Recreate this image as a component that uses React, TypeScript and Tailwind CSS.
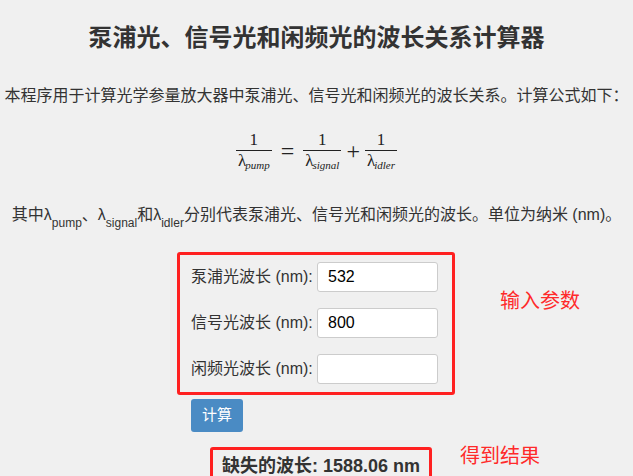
import React, { useState } from 'react';

const sans = { fontFamily: '"Liberation Sans", "Noto Sans CJK SC", sans-serif' };
const serif = { fontFamily: '"Liberation Serif", "DejaVu Serif", serif' };

const Frac: React.FC<{ sub: string }> = ({ sub }) => (
  <span className="inline-flex flex-col items-center mx-[3px]">
    <span className="text-[17px] leading-[20px] px-1">1</span>
    <span className="block w-full border-t border-[#222]" />
    <span className="text-[17px] leading-[20px] px-[2px] whitespace-nowrap">
      λ<span className="italic text-[11px] relative top-[3px] -ml-[1px]">{sub}</span>
    </span>
  </span>
);

const App: React.FC = () => {
  const [pump, setPump] = useState('532');
  const [signal, setSignal] = useState('800');
  const [idler, setIdler] = useState('');
  const [result, setResult] = useState('1588.06');

  const calc = () => {
    const p = parseFloat(pump);
    const s = parseFloat(signal);
    if (p > 0 && s > 0 && s !== p) {
      const i = 1 / (1 / p - 1 / s);
      setResult(i.toFixed(2));
    }
  };

  const rows = [
    { label: '泵浦光波长 (nm):', value: pump, set: setPump },
    { label: '信号光波长 (nm):', value: signal, set: setSignal },
    { label: '闲频光波长 (nm):', value: idler, set: setIdler },
  ];

  return (
    <div className="relative h-[476px] overflow-hidden bg-[#f0f0f0] text-[#333]" style={sans}>
      <h1 className="pt-[22px] text-center text-[24px] leading-[32px] font-bold">
        泵浦光、信号光和闲频光的波长关系计算器
      </h1>

      <p className="mt-[30px] text-center text-[16px] leading-[24px]">
        本程序用于计算光学参量放大器中泵浦光、信号光和闲频光的波长关系。计算公式如下：
      </p>

      <div className="mt-[22px] flex items-center justify-center text-[#222]" style={serif}>
        <Frac sub="pump" />
        <span className="text-[24px] mx-[6px] leading-none">=</span>
        <Frac sub="signal" />
        <span className="text-[24px] mx-[2px] leading-none">+</span>
        <Frac sub="idler" />
      </div>

      <p className="mt-[31px] text-center text-[16px] leading-[24px]">
        其中λ<sub className="text-[12px] align-[-4px]">pump</sub>、λ<sub className="text-[12px] align-[-4px]">signal</sub>和λ
        <sub className="text-[12px] align-[-4px]">idler</sub>分别代表泵浦光、信号光和闲频光的波长。单位为纳米 (nm)。
      </p>

      <div className="ml-[177px] mt-[25px] w-[278px] h-[143px] border-[3px] border-[#ff2020] rounded-[3px] pt-[7px] pl-[11px] flex flex-col gap-[16px]">
        {rows.map(r => (
          <div key={r.label} className="flex items-center h-[30px]">
            <label className="w-[126px] text-[16px] whitespace-nowrap">{r.label}</label>
            <input
              value={r.value}
              onChange={e => r.set(e.target.value)}
              className="w-[121px] h-[30px] bg-white border border-[#ccc] rounded-[3px] px-[10px] text-[16px] text-black outline-none"
            />
          </div>
        ))}
      </div>

      <button
        onClick={calc}
        className="ml-[191px] mt-[4px] w-[52px] h-[33px] rounded-[3px] bg-[#4a8bc4] text-white text-[15px]"
      >
        计算
      </button>

      <div className="ml-[210px] mt-[15px] w-[222px] h-[40px] border-[3px] border-[#ff2020] rounded-[3px] pl-[9px] pt-[4px]">
        <span className="text-[18px] font-bold leading-[24px] whitespace-nowrap">缺失的波长: {result} nm</span>
      </div>

      <span className="absolute left-[500px] top-[289px] text-[20px] leading-[24px] text-[#ff2a2a]">输入参数</span>
      <span className="absolute left-[460px] top-[444px] text-[20px] leading-[24px] text-[#ff2a2a]">得到结果</span>
    </div>
  );
};

export default App;
